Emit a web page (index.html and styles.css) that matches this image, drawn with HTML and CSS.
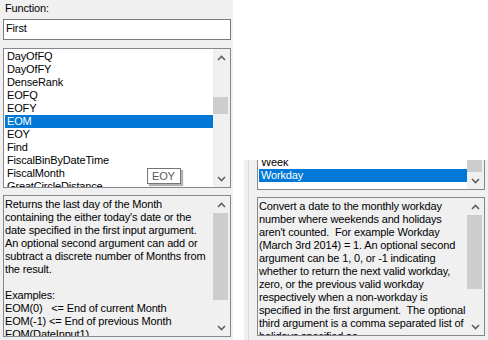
FILE: index.html
```html
<!DOCTYPE html>
<html lang="en">
<head>
  <meta charset="UTF-8" />
  <title>Function picker</title>
  <link rel="stylesheet" href="styles.css">
</head>
<body>
  <div class="screen">

    <!-- left dialog -->
    <section class="pane-left">
      <div class="field-label">Function:</div>
      <div class="textbox">First</div>

      <div class="listbox list-main">
        <ul class="items">
          <li>DayOfFQ</li>
          <li>DayOfFY</li>
          <li>DenseRank</li>
          <li>EOFQ</li>
          <li>EOFY</li>
          <li class="selected">EOM</li>
          <li>EOY</li>
          <li>Find</li>
          <li>FiscalBinByDateTime</li>
          <li>FiscalMonth</li>
          <li>GreatCircleDistance</li>
        </ul>
        <div class="scrollbar">
          <div class="sb-btn">
            <svg width="9" height="6" viewBox="0 0 9 6"><polyline points="1,5 4.5,1.5 8,5" /></svg>
          </div>
          <div class="sb-track"><div class="sb-thumb thumb-list"></div></div>
          <div class="sb-btn">
            <svg width="9" height="6" viewBox="0 0 9 6"><polyline points="1,1 4.5,4.5 8,1" /></svg>
          </div>
        </div>
        <div class="tooltip">EOY</div>
      </div>

      <div class="descbox desc-left">
        <p class="desc-text">Returns the last day of the Month
containing the either today's date or the
date specified in the first input argument.
An optional second argument can add or
subtract a discrete number of Months from
the result.

Examples:
EOM(0)   &lt;= End of current Month
EOM(-1) &lt;= End of previous Month
EOM(DateInput1)</p>
        <div class="scrollbar">
          <div class="sb-btn">
            <svg width="9" height="6" viewBox="0 0 9 6"><polyline points="1,5 4.5,1.5 8,5" /></svg>
          </div>
          <div class="sb-track"><div class="sb-thumb thumb-desc-left"></div></div>
          <div class="sb-btn">
            <svg width="9" height="6" viewBox="0 0 9 6"><polyline points="1,1 4.5,4.5 8,1" /></svg>
          </div>
        </div>
      </div>
    </section>

    <!-- right side: second capture of the same dialog -->
    <section class="pane-right">
      <div class="blank"></div>
      <div class="pane-lower">
        <div class="edge"></div>
        <div class="dialog">
          <div class="listbox list-clipped">
            <ul class="items">
              <li>Week</li>
              <li class="selected">Workday</li>
            </ul>
            <div class="scrollbar">
              <div class="sb-track"><div class="sb-thumb thumb-clipped"></div></div>
              <div class="sb-btn">
                <svg width="9" height="6" viewBox="0 0 9 6"><polyline points="1,1 4.5,4.5 8,1" /></svg>
              </div>
            </div>
          </div>

          <div class="descbox desc-right">
            <p class="desc-text">Convert a date to the monthly workday
number where weekends and holidays
aren't counted.  For example Workday
(March 3rd 2014) = 1. An optional second
argument can be 1, 0, or -1 indicating
whether to return the next valid workday,
zero, or the previous valid workday
respectively when a non-workday is
specified in the first argument.  The optional
third argument is a comma separated list of
holidays specified as...</p>
            <div class="scrollbar">
              <div class="sb-btn">
                <svg width="9" height="6" viewBox="0 0 9 6"><polyline points="1,5 4.5,1.5 8,5" /></svg>
              </div>
              <div class="sb-track"><div class="sb-thumb thumb-desc-right"></div></div>
              <div class="sb-btn">
                <svg width="9" height="6" viewBox="0 0 9 6"><polyline points="1,1 4.5,4.5 8,1" /></svg>
              </div>
            </div>
          </div>
        </div>
      </div>
    </section>

  </div>
</body>
</html>
```

FILE: styles.css
```css
* {
  margin: 0;
  padding: 0;
  box-sizing: border-box;
}

body {
  width: 488px;
  height: 340px;
  overflow: hidden;
  background: #fff;
  color: #000;
  font-family: 'Liberation Sans', Arial, sans-serif;
  font-size: 11px;
  line-height: 13px;
  letter-spacing: -0.15px;
}

.screen {
  display: flex;
  height: 340px;
}

/* ---------- left dialog ---------- */
.pane-left {
  width: 233px;
  background: #f0f0f0;
  padding: 2px 2px 0 3px;
  display: flex;
  flex-direction: column;
}

.field-label {
  height: 13px;
  padding-left: 2px;
}

.textbox {
  margin-top: 4px;
  height: 21px;
  border: 1px solid #7a7a7a;
  background: #fff;
  padding: 2px 2px;
}

.listbox {
  display: flex;
  border: 1px solid #828790;
  background: #fff;
  overflow: hidden;
}

.list-main {
  position: relative;
  margin-top: 8px;
  height: 140px;
}

.items {
  list-style: none;
  flex: 1;
  padding: 1px 0 0 1px;
  overflow: hidden;
}

.items li {
  height: 13px;
  padding-left: 2px;
  white-space: nowrap;
}

.items li.selected {
  background: #0078d7;
  color: #fff;
}

/* ---------- scrollbars ---------- */
.scrollbar {
  width: 17px;
  flex: none;
  display: flex;
  flex-direction: column;
  background: #f0f0f0;
}

.sb-btn {
  height: 17px;
  flex: none;
  display: flex;
  align-items: center;
  justify-content: center;
}

.sb-btn svg polyline {
  fill: none;
  stroke: #606060;
  stroke-width: 1.6;
}

.sb-track {
  flex: 1;
}

.sb-thumb {
  width: 15px;
  background: #cdcdcd;
}

.thumb-list { margin-top: 31px; height: 17px; }
.thumb-desc-left { height: 87px; }
.thumb-desc-right { height: 74px; }
.thumb-clipped { height: 12px; }

/* ---------- tooltip ---------- */
.tooltip {
  position: absolute;
  left: 143px;
  top: 119px;
  width: 34px;
  height: 16px;
  border: 1px solid #767676;
  background: #fff;
  color: #575757;
  padding: 1px 0 0 4px;
  box-shadow: 2px 2px 1px rgba(0, 0, 0, 0.3);
}

/* ---------- description boxes ---------- */
.descbox {
  display: flex;
  border: 1px solid #828790;
  background: #f0f0f0;
  overflow: hidden;
}

.desc-text {
  flex: 1;
  padding: 2px 0 0 1px;
  white-space: pre;
  overflow: hidden;
}

.desc-left {
  margin-top: 7px;
  height: 142px;
}

/* ---------- right side ---------- */
.pane-right {
  width: 255px;
  display: flex;
  flex-direction: column;
}

.blank {
  height: 160px;
  background: #fff;
}

.pane-lower {
  flex: 1;
  display: flex;
  margin-left: 11px;
  background: #f0f0f0;
  overflow: hidden;
}

.edge {
  width: 5px;
  border-right: 1px solid #dadada;
}

.dialog {
  padding-left: 8px;
  width: 236px;
  display: flex;
  flex-direction: column;
}

.list-clipped {
  height: 30px;
  border-top: none;
}

.list-clipped .items {
  padding-top: 0;
  margin-top: -4px;
}

.desc-right {
  margin-top: 7px;
  height: 139px;
}
```
